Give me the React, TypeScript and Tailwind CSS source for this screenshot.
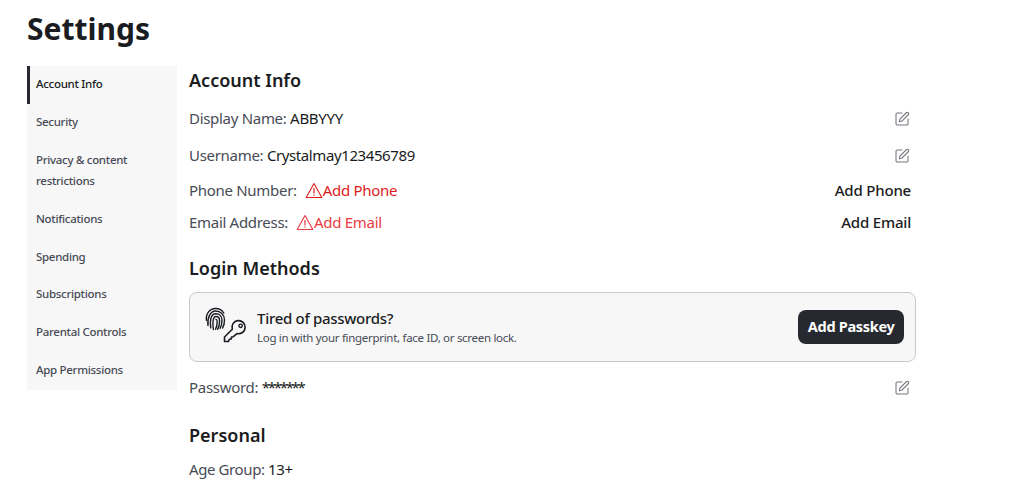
import { SquarePen } from 'lucide-react'

const NAV_ITEMS = [
  { label: 'Account Info', active: true },
  { label: 'Security' },
  { label: 'Privacy & content restrictions' },
  { label: 'Notifications' },
  { label: 'Spending' },
  { label: 'Subscriptions' },
  { label: 'Parental Controls' },
  { label: 'App Permissions' },
]

function WarningIcon() {
  return (
    <svg viewBox="0 0 18 17" className="h-[17px] w-[18px] shrink-0" fill="none" stroke="currentColor">
      <path d="M9 1.5 16.8 15.5H1.2Z" strokeWidth="1.1" strokeLinejoin="round" />
      <path d="M9 6v5.5M9 12.5v1.2" strokeWidth="1.2" />
    </svg>
  )
}

function PasskeyIcon() {
  return (
    <svg viewBox="0 0 42 36" className="h-9 w-[42px] shrink-0 overflow-visible" fill="none" stroke="#1a1c21" strokeLinecap="round">
      <g strokeWidth="1.4">
        <path d="M1.5 11.5C.5 4.5 5 -.5 10.5 -.5c3.5 0 6.5 1.6 8.3 4.5" />
        <path d="M3 16.5C2 9 5.5 2 10.5 2c5 0 9 3.6 9 9 0 3.5-.6 6-2 8" />
        <path d="M5.8 18.8C4.8 14 5 4.8 10.8 4.8c4 0 6.2 3 6.2 6.4 0 3.6-.7 6-2 8.2" />
        <path d="M8.4 20.5C7.6 15.5 7.4 7.5 11 7.5c2.8 0 3.6 2.2 3.6 4.4 0 3.4-.6 6-2 8.4" />
        <path d="M11 10.5c1 0 1.2 1 1.2 2 0 2.8-.5 5.4-1.6 7.8" />
      </g>
      <path
        d="M32 24.6a6.6 6.6 0 1 0-4.7-4.4L19.5 28v4.5h4l.8-2.2 1.8-.3.4-1.9 1.8-.4Z"
        strokeWidth="1.6"
        strokeLinejoin="round"
      />
      <circle cx="35.6" cy="16.8" r="1.7" strokeWidth="1.4" />
    </svg>
  )
}

function InfoRow({ label, value, valueClass }: { label: string; value: string; valueClass?: string }) {
  return (
    <div className="flex items-center justify-between pr-[6px]">
      <p className="text-[15px] tracking-[-0.3px] text-[#474b55]">
        {label} <span className={`text-[#1a1c21] ${valueClass ?? ''}`}>{value}</span>
      </p>
      <SquarePen className="mt-px size-[16px] text-[#75777c]" strokeWidth={1.6} />
    </div>
  )
}

function MissingRow({ label, action, color }: { label: string; action: string; color: string }) {
  return (
    <div className="flex items-center justify-between pr-[5px]">
      <div className="flex items-center gap-2 text-[15px] tracking-[-0.3px]">
        <span className="text-[#474b55]">{label}</span>
        <span className={`flex items-center ${color}`}>
          <WarningIcon />
          {action}
        </span>
      </div>
      <button className="text-[15px] font-medium tracking-[-0.2px] text-[#1a1c21]">{action}</button>
    </div>
  )
}

export default function App() {
  return (
    <div className="h-[487px] overflow-hidden bg-white pl-[27px] font-['Noto_Sans',sans-serif]">
      <h1 className="pt-[9px] text-[30px] leading-[40px] font-bold text-[#1a1c21]">Settings</h1>
      <div className="mt-[17px] flex items-start gap-3">
        <nav className="w-[150px] bg-[#f7f7f8] pb-px">
          {NAV_ITEMS.map((item) => (
            <div
              key={item.label}
              className={`border-l-[3px] pt-[7.4px] pr-3 pb-[9.4px] pl-[6px] text-[11.5px] leading-[21px] font-medium tracking-[-0.3px] ${
                item.active ? 'border-[#272930] text-[#1a1c21]' : 'border-transparent text-[#474b55]'
              }`}
            >
              {item.label}
            </div>
          ))}
        </nav>
        <main className="w-[727px]">
          <h2 className="text-[18px] leading-[28px] font-semibold text-[#1a1c21]">Account Info</h2>
          <div className="mt-[13px] flex flex-col gap-[15px] leading-[22px]">
            <InfoRow label="Display Name:" value="ABBYYY" />
            <InfoRow label="Username:" value="Crystalmay123456789" valueClass="tracking-[-0.4px]" />
          </div>
          <div className="mt-[13px] flex flex-col gap-[10px] leading-[22px]">
            <MissingRow label="Phone Number:" action="Add Phone" color="text-[#e01b1b]" />
            <MissingRow label="Email Address:" action="Add Email" color="text-[#ea3a42]" />
          </div>
          <h2 className="mt-[20px] text-[18px] leading-[30px] font-semibold text-[#1a1c21]">Login Methods</h2>
          <div className="mt-[9px] flex h-[70px] items-center rounded-lg border border-[#c8c9cc] bg-[#f7f7f8] pr-[11px] pl-[15px]">
            <PasskeyIcon />
            <div className="ml-[10px] flex-1">
              <p className="text-[15px] leading-[18px] font-medium tracking-[-0.3px] text-[#1a1c21]">Tired of passwords?</p>
              <p className="mt-[3px] text-[11.5px] leading-[16px] tracking-[-0.3px] text-[#474b55]">Log in with your fingerprint, face ID, or screen lock.</p>
            </div>
            <button className="h-[34px] rounded-lg bg-[#272930] px-[9.5px] text-[14.5px] font-bold tracking-[-0.3px] text-white">Add Passkey</button>
          </div>
          <div className="mt-[14px] leading-[22px]">
            <InfoRow label="Password:" value="*******" valueClass="tracking-[-2.3px]" />
          </div>
          <h2 className="mt-[22px] text-[18px] leading-[30px] font-semibold text-[#1a1c21]">Personal</h2>
          <p className="mt-[8px] text-[15px] leading-[22px] tracking-[-0.4px] text-[#474b55]">
            Age Group: <span className="text-[#1a1c21]">13+</span>
          </p>
        </main>
      </div>
    </div>
  )
}
